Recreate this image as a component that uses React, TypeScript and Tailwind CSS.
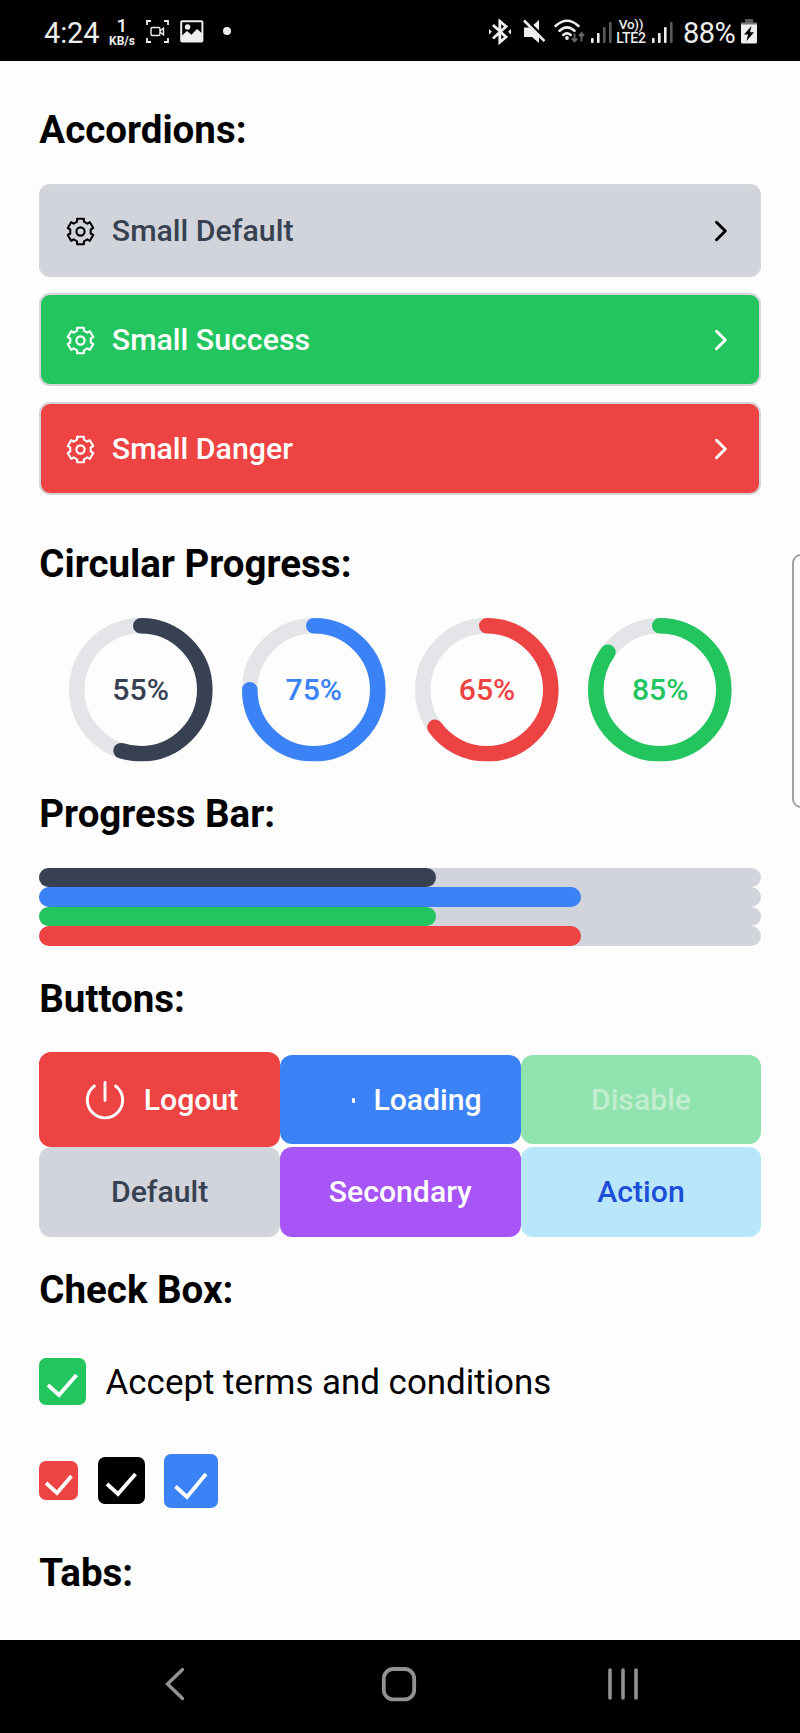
const INK = "#eeeeee";

function Heading({ children, className }: { children: string; className: string }) {
  return (
    <h2 className={`h-[46px] text-[38.5px] leading-[46px] font-bold whitespace-nowrap text-black ${className}`}>
      {children}
    </h2>
  );
}

function polar(radius: number, degrees: number) {
  const a = ((degrees - 90) * Math.PI) / 180;
  return `${(14.5 + radius * Math.cos(a)).toFixed(2)},${(14.5 + radius * Math.sin(a)).toFixed(2)}`;
}

const gearOutline = [0, 60, 120, 180, 240, 300]
  .map((t) => [polar(10.3, t - 25), polar(10.4, t - 19), polar(13.2, t - 15), polar(13.2, t + 15), polar(10.4, t + 19), polar(10.3, t + 25)].join(" "))
  .join(" ");

function GearIcon({ className }: { className: string }) {
  return (
    <svg width="29" height="29" viewBox="0 0 29 29" className={className} fill="none" stroke="currentColor" strokeWidth="2.1" strokeLinejoin="round">
      <polygon points={gearOutline} />
      <circle cx="14.5" cy="14.5" r="4.1" />
    </svg>
  );
}

function PowerIcon({ className }: { className: string }) {
  return (
    <svg width="40" height="40" viewBox="0 0 40 40" className={className} fill="none" stroke="currentColor" strokeWidth="2.9" strokeLinecap="round">
      <path d="M20 2.5v18M9.4 6a17.7 17.7 0 1 0 21.2 0" />
    </svg>
  );
}

function SignalBars({ lit, className }: { lit: number; className: string }) {
  const bars = [
    [0, 17],
    [6, 12],
    [12, 6],
    [18, 1],
  ];
  return (
    <svg width="21" height="23" viewBox="0 0 21 23" className={className}>
      {bars.map(([x, y], i) => (
        <rect key={x} x={x} y={y} width="2.6" height={22 - y} rx="0.8" fill={i < lit ? INK : "#5a5a5a"} />
      ))}
    </svg>
  );
}

function StatusBar() {
  return (
    <header className="flex h-[61px] shrink-0 items-start bg-black text-[#eeeeee]">
      <span className="mt-[16px] ml-[44px] w-[56px] text-[29px] leading-[34px] tracking-[-0.1px] whitespace-nowrap">4:24</span>
      <div className="mt-[17px] ml-[7px] flex w-[30px] flex-col items-center">
        <span className="text-[19px] leading-[18px] font-medium">1</span>
        <span className="text-[12px] leading-[12px] font-bold">KB/s</span>
      </div>
      <svg width="23" height="23" viewBox="0 0 23 23" className="mt-[20px] ml-[9px]" fill="none" stroke={INK} strokeWidth="1.8">
        <path d="M1 5V1h4M18 1h4v4M22 18v4h-4M5 22H1v-4" />
        <rect x="5" y="7.5" width="9" height="8" rx="1.5" strokeWidth="1.4" />
        <path d="M14 11l3.5-2.8v6.6L14 12" strokeWidth="1.4" />
      </svg>
      <svg width="24" height="23" viewBox="0 0 24 23" className="mt-[20px] ml-[11px]">
        <rect x="1.2" y="1.2" width="21.2" height="20.2" rx="1" fill="none" stroke={INK} strokeWidth="2" />
        <circle cx="7.6" cy="7" r="2.7" fill={INK} />
        <path d="M1.5 16l5.5-5 4.5 3.8 5.5-5.8 5.4 4.5v8H1.5z" fill={INK} />
      </svg>
      <span className="mt-[27px] ml-[19px] size-[8px] rounded-full bg-[#eeeeee]" />
      <div className="grow" />
      <svg width="22" height="26" viewBox="0 0 22 26" className="mt-[19px] shrink-0" fill="none" stroke={INK} strokeWidth="2.8">
        <path d="M4 6l13 12-6.2 5.3V2.2L17 7.5 4 19.5" />
        <path d="M0 10v5.5l2.9-2.7zM22 10v5.5l-2.9-2.7z" fill={INK} stroke="none" />
      </svg>
      <svg width="22" height="24" viewBox="0 0 22 24" className="mt-[19px] ml-[12px] shrink-0">
        <path d="M1 8.5h5.5L16 17.5V24l-7-6H1z" fill={INK} />
        <path d="M16 1v10.5L10.3 6z" fill={INK} />
        <path d="M2.5 0l20 20" stroke="#000" strokeWidth="1.6" />
        <path d="M1 1.5l20.5 20.5" stroke={INK} strokeWidth="2.6" />
      </svg>
      <svg width="32" height="24" viewBox="0 0 32 24" className="mt-[19px] ml-[9px] shrink-0" fill="none" strokeLinecap="round">
        <path d="M1.5 7Q13 -3.5 24.5 7M5.5 11.8Q13 5 20.5 11.8M9.3 16Q13 12.8 16.7 16" stroke={INK} strokeWidth="2.5" />
        <circle cx="13" cy="19" r="1.9" fill={INK} />
        <path d="M20.5 14.5v7M18 19.5l2.5 2.8 2.5-2.8M27.5 22.5v-7M25 17l2.5-2.8L30 17" stroke="#666" strokeWidth="1.9" strokeLinecap="butt" />
      </svg>
      <SignalBars lit={2} className="mt-[21px] ml-[5px] shrink-0" />
      <div className="mt-[18px] ml-[3px] flex w-[32px] shrink-0 flex-col items-center font-medium whitespace-nowrap">
        <span className="text-[13.5px] leading-[13px] tracking-[-0.3px]">Vo))</span>
        <span className="text-[14px] leading-[14px] tracking-[-0.2px]">LTE2</span>
      </div>
      <SignalBars lit={3} className="mt-[21px] ml-[5px] shrink-0" />
      <span className="mt-[16px] ml-[10px] w-[55px] shrink-0 text-[29px] leading-[34px] tracking-[-0.6px] whitespace-nowrap">88%</span>
      <svg width="16" height="25" viewBox="0 0 16 25" className="mt-[19px] mr-[43px] ml-[3px] shrink-0">
        <rect x="4" width="8" height="5" fill="#5a5a5a" />
        <rect y="3.5" width="16" height="3.5" fill="#777" />
        <path d="M0 5.5h16V23a1.5 1.5 0 0 1-1.5 1.5h-13A1.5 1.5 0 0 1 0 23z" fill={INK} />
        <path d="M10.5 7L3 15.5h4L5.5 22 13 13.3H9z" fill="#000" />
      </svg>
    </header>
  );
}

const accordions = [
  { label: "Small Default", box: "bg-[#d1d5db]", text: "text-[#374151]", icon: "text-black" },
  { label: "Small Success", box: "bg-[#22c55e]", text: "text-white", icon: "text-white" },
  { label: "Small Danger", box: "bg-[#ee4343]", text: "text-white", icon: "text-white" },
];

function Accordions() {
  return (
    <div className="mt-[30.5px] flex flex-col gap-[16px]">
      {accordions.map((a) => (
        <button
          key={a.label}
          className={`flex h-[93.2px] w-full items-center rounded-[11px] border-2 border-[#d3d5da] pt-[2px] pr-[31px] pl-[25px] ${a.box}`}
        >
          <GearIcon className={a.icon} />
          <span className={`ml-[16.5px] text-[30.3px] leading-[36px] font-medium whitespace-nowrap ${a.text}`}>{a.label}</span>
          <svg
            width="14"
            height="22"
            viewBox="0 0 14 22"
            className={`ml-auto ${a.icon}`}
            fill="none"
            stroke="currentColor"
            strokeWidth="3"
            strokeLinecap="round"
            strokeLinejoin="round"
          >
            <path d="M2.5 2.3l8.8 8.7-8.8 8.7" />
          </svg>
        </button>
      ))}
    </div>
  );
}

const rings = [
  { value: 55, color: "#374151" },
  { value: 75, color: "#3b82f6" },
  { value: 65, color: "#ee4343" },
  { value: 85, color: "#22c55e" },
];

function CircularProgress() {
  return (
    <div className="mt-[31px] flex h-[143.6px] justify-between pr-[29.3px] pl-[29.5px]">
      {rings.map(({ value, color }) => (
        <div key={value} className="grid size-[143.6px] place-items-center">
          <svg viewBox="0 0 144 144" className="col-start-1 row-start-1 size-full -rotate-90" fill="none" strokeWidth="15.6">
            <circle cx="72" cy="72" r="64.2" stroke="#e4e5e9" />
            <circle
              cx="72"
              cy="72"
              r="64.2"
              stroke={color}
              strokeLinecap="round"
              pathLength="100"
              strokeDasharray={`${value} 100`}
            />
          </svg>
          <span className="col-start-1 row-start-1 pt-[1px] text-[30.2px] leading-[36px] font-medium" style={{ color }}>
            {value}%
          </span>
        </div>
      ))}
    </div>
  );
}

const bars = [
  { fill: "w-[55%] bg-[#374151]" },
  { fill: "w-[75%] bg-[#3b82f6]" },
  { fill: "w-[55%] bg-[#22c55e]" },
  { fill: "w-[75%] bg-[#ee4343]" },
];

function ProgressBars() {
  return (
    <div className="mt-[30.9px] flex flex-col">
      {bars.map((b, i) => (
        <div key={i} className="h-[19.5px] rounded-full bg-[#d1d5db]">
          <div className={`h-full rounded-full ${b.fill}`} />
        </div>
      ))}
    </div>
  );
}

const buttonBase =
  "flex h-[89.6px] items-center justify-center rounded-[12px] pt-[1px] text-[30.2px] leading-[36px] font-medium whitespace-nowrap";

function Buttons() {
  return (
    <div className="mt-[30.3px] grid grid-cols-3 items-center">
      <button className="flex h-[94.7px] items-center rounded-[12px] bg-[#ee4343] pt-[1px] pl-[45.5px] text-[30.2px] leading-[36px] font-medium text-white">
        <PowerIcon className="shrink-0" />
        <span className="ml-[19px]">Logout</span>
      </button>
      <button className={`${buttonBase} bg-[#3b82f6] text-white`}>
        <span className="mr-[18px] ml-[33px] h-[5px] w-[3.5px] rounded-[1px] bg-white" />
        Loading
      </button>
      <button className={`${buttonBase} bg-[#90e2ae] text-[#c1edd0]`}>Disable</button>
      <button className={`${buttonBase} bg-[#d1d5db] text-[#374151]`}>Default</button>
      <button className={`${buttonBase} bg-[#a855f7] text-white`}>Secondary</button>
      <button className={`${buttonBase} bg-[#b9e6fb] text-[#1d4ed8]`}>Action</button>
    </div>
  );
}

function Check({ size, color, points }: { size: number; color: string; points: string }) {
  return (
    <span className={`block shrink-0 rounded-[7px] ${color}`}>
      <svg width={size} height={size} viewBox={`0 0 ${size} ${size}`} fill="none" stroke="#fff" strokeWidth="3.8">
        <polyline points={points} />
      </svg>
    </span>
  );
}

function NavBar() {
  return (
    <nav className="mt-auto flex h-[93.5px] shrink-0 items-start bg-black pt-[26.5px]">
      <svg width="22" height="36" viewBox="0 0 22 36" className="ml-[163.5px]" fill="none" stroke="#929292" strokeWidth="3.4" strokeLinecap="round">
        <path d="M18.5 3.5L3.5 18l15 14.5" strokeLinejoin="miter" />
      </svg>
      <svg width="36" height="36" viewBox="0 0 36 36" className="ml-[195.5px]" fill="none" stroke="#929292" strokeWidth="3.8">
        <rect x="2.8" y="3" width="30.4" height="30.4" rx="9.5" />
      </svg>
      <svg width="32" height="36" viewBox="0 0 32 36" className="ml-[190px]" stroke="#929292" strokeWidth="3.6" strokeLinecap="round">
        <path d="M3 4v28M16 4v28M29 4v28" />
      </svg>
    </nav>
  );
}

export default function App() {
  return (
    <div className="relative flex h-[1733px] w-[800px] flex-col overflow-hidden bg-[#fdfdfd] font-['Roboto',sans-serif]">
      <StatusBar />
      <main className="flex flex-col pr-[38.7px] pl-[39.3px]">
        <Heading className="mt-[46px]">Accordions:</Heading>
        <Accordions />
        <Heading className="mt-[45.6px]">Circular Progress:</Heading>
        <CircularProgress />
        <Heading className="mt-[29.8px]">Progress Bar:</Heading>
        <ProgressBars />
        <Heading className="mt-[30px]">Buttons:</Heading>
        <Buttons />
        <Heading className="mt-[30.4px]">Check Box:</Heading>
        <div className="mt-[45px] flex h-[47px] items-center gap-[19.3px]">
          <Check size={47} color="bg-[#22c55e]" points="9,27 20,37 37.5,17" />
          <span className="pt-[3px] text-[34.9px] leading-[42px] whitespace-nowrap text-black">Accept terms and conditions</span>
        </div>
        <div className="mt-[49px] flex h-[54px] items-center gap-[19.3px]">
          <Check size={39} color="bg-[#ee4343]" points="7,22 18,32 32.5,15" />
          <Check size={47} color="bg-black" points="9,27 20,37 37.5,17" />
          <Check size={54} color="bg-[#3b82f6]" points="11.5,32.5 23,43 42,20" />
        </div>
        <Heading className="mt-[41.6px]">Tabs:</Heading>
      </main>
      <NavBar />
      <div className="absolute top-[554px] right-[-4px] h-[254px] w-[12px] rounded-l-[9px] border-2 border-[#a3a3a3] bg-[#fdfdfd]" />
    </div>
  );
}
